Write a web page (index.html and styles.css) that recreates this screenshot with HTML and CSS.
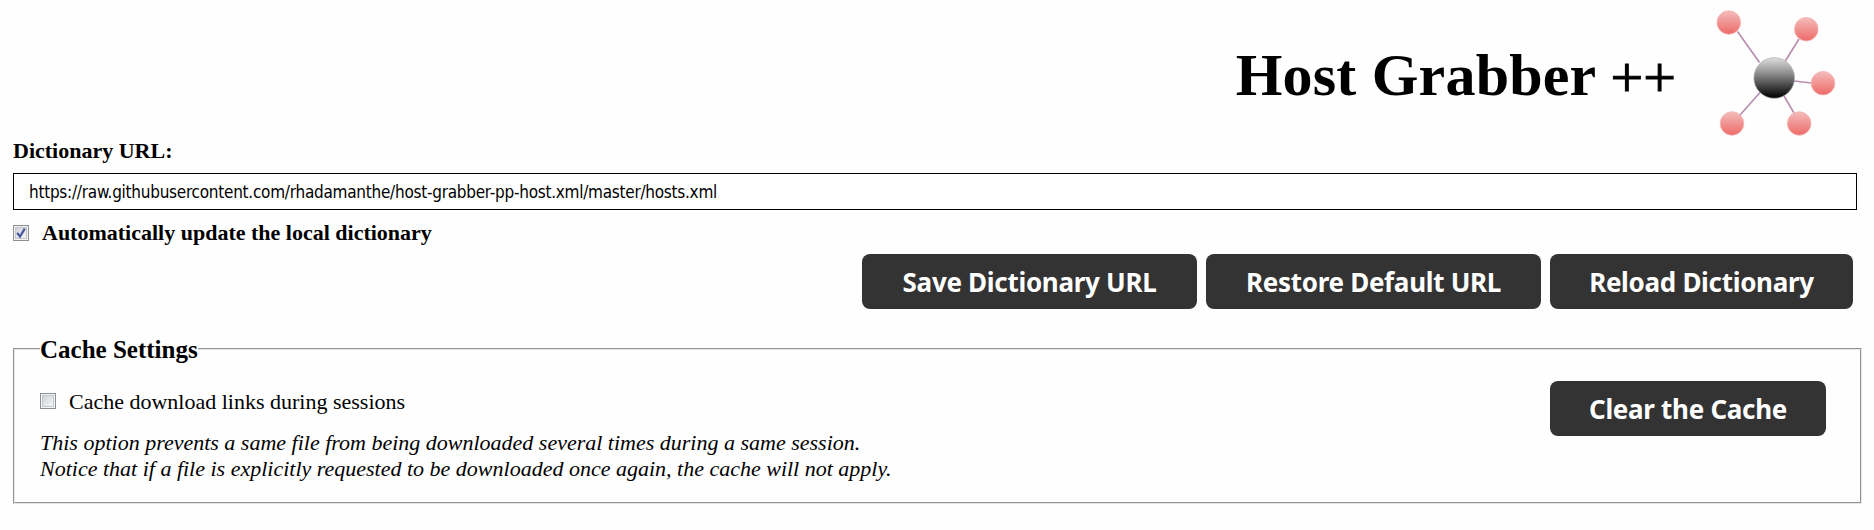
FILE: index.html
```html
<!DOCTYPE html>
<html lang="en">
<head>
<meta charset="utf-8">
<title>Host Grabber ++</title>
<link rel="stylesheet" href="styles.css">
</head>
<body>
<header class="header">
  <h1 class="title">Host Grabber <span class="plus">++</span></h1>
  <svg class="logo" viewBox="0 0 134 137" width="134" height="137" aria-hidden="true">
    <defs>
      <linearGradient id="core" x1="0" y1="0" x2="0" y2="1">
        <stop offset="0" stop-color="#dedede"/>
        <stop offset="0.35" stop-color="#969696"/>
        <stop offset="0.95" stop-color="#080808"/>
      </linearGradient>
      <linearGradient id="host" x1="0" y1="0" x2="0" y2="1">
        <stop offset="0" stop-color="#f3bcbb"/>
        <stop offset="1" stop-color="#ee6a68"/>
      </linearGradient>
    </defs>
    <path d="M31.5 31.5 53.5 62.5M93 39 79 61.5M88 81 106 83M78 96 88 113M54 92.5 34 115" fill="none" stroke="#b98fb0" stroke-width="1.7"/>
    <g fill="url(#host)" stroke="#f4b6b4" stroke-width="0.8">
      <circle cx="22.8" cy="22.5" r="11.8"/>
      <circle cx="100.3" cy="29.2" r="11.8"/>
      <circle cx="117" cy="83.2" r="11.8"/>
      <circle cx="93.2" cy="123.5" r="11.8"/>
      <circle cx="26" cy="123.5" r="11.8"/>
    </g>
    <circle cx="68.2" cy="78" r="20.3" fill="url(#core)" stroke="#a9a9a9" stroke-width="0.7"/>
  </svg>
</header>

<main class="content">
  <label class="field-label" for="url">Dictionary URL:</label>
  <input class="url" id="url" type="text" spellcheck="false" value="https://raw.githubusercontent.com/rhadamanthe/host-grabber-pp-host.xml/master/hosts.xml">
  <label class="option option-strong">
    <svg class="check" viewBox="0 0 16 16" width="16" height="16"><use href="#box"/><path d="M4.2 7.8 7 11.6 11.8 3.6" fill="none" stroke="#46569f" stroke-width="2.2"/></svg>
    Automatically update the local dictionary
  </label>
  <div class="actions">
    <button class="btn btn-wide">Save Dictionary URL</button>
    <button class="btn btn-wide">Restore Default URL</button>
    <button class="btn btn-reload">Reload Dictionary</button>
  </div>

  <fieldset class="cache">
    <legend class="legend">Cache Settings</legend>
    <div class="cache-body">
      <div class="cache-text">
        <label class="option">
          <svg class="check check-raised" viewBox="0 0 16 16" width="16" height="16">
            <defs><linearGradient id="boxfill" x1="0" y1="0" x2="1" y2="1"><stop offset="0" stop-color="#ced1d5"/><stop offset="1" stop-color="#f7f7f7"/></linearGradient></defs>
            <g id="box"><rect x="0.5" y="0.5" width="15" height="15" fill="#f4f4f4" stroke="#8e8f8f"/><rect x="2.5" y="2.5" width="11" height="11" fill="url(#boxfill)" stroke="#c3c6ca"/></g>
          </svg>
          Cache download links during sessions
        </label>
        <p class="note">This option prevents a same file from being downloaded several times during a same session.<br>Notice that if a file is explicitly requested to be downloaded once again, the cache will not apply.</p>
      </div>
      <button class="btn btn-clear">Clear the Cache</button>
    </div>
  </fieldset>
</main>
</body>
</html>
```
FILE: styles.css
```css
* { box-sizing: border-box; }

body {
  margin: 0;
  background: #fefefe;
  color: #000;
  font: 22px/26px "Liberation Serif", serif;
}

.header {
  display: flex;
  justify-content: flex-end;
  height: 137px;
  padding-right: 34px;
}

.title {
  margin: 40px 30px 0 0;
  font-size: 60px;
  line-height: 70px;
  letter-spacing: 0.2px;
  white-space: nowrap;
}

.plus {
  font-size: 58px;
  font-weight: normal;
  line-height: 1;
  letter-spacing: 0;
  vertical-align: -2px;
  -webkit-text-stroke: 1px #000;
}

.logo { flex: none; }

.content {
  display: flex;
  flex-direction: column;
  padding: 0 12px 0 13px;
}

.field-label { padding-top: 1px; font-weight: bold; }

.url {
  width: 1844px;
  height: 37px;
  margin-top: 9px;
  padding: 1px 15px 0;
  border: 1px solid #000;
  background: #fff;
  color: #000;
  font: 17px "DejaVu Sans Condensed", "DejaVu Sans", sans-serif;
  letter-spacing: -0.26px;
}

.option {
  display: flex;
  align-items: center;
  gap: 13px;
}

.option-strong { margin-top: 10px; font-weight: bold; }

.check { flex: none; }
.check-raised { margin-bottom: 2px; }

.actions {
  display: flex;
  justify-content: flex-end;
  gap: 9px;
  margin-top: 8px;
  padding-right: 9px;
}

.btn {
  flex: none;
  height: 55px;
  padding: 0;
  border: 0;
  border-radius: 8px;
  background: #333;
  color: #fff;
  font: bold 26px "Noto Sans", sans-serif;
  letter-spacing: -0.3px;
}

.btn-wide { width: 335px; }
.btn-reload { width: 303px; }

.cache {
  margin: 25px 0 0;
  padding: 0 34px 0 25px;
  height: 170px;
  border: 2px groove #e6e6e6;
}

.legend {
  padding: 2px 0 0;
  font-size: 25px;
  line-height: 28px;
  font-weight: bold;
}

.cache-body {
  display: flex;
  justify-content: space-between;
  padding-top: 17px;
}

.cache-text { padding-top: 8px; }

.note { margin: 15px 0 0; font-style: italic; }

.btn-clear { width: 276px; }
```
